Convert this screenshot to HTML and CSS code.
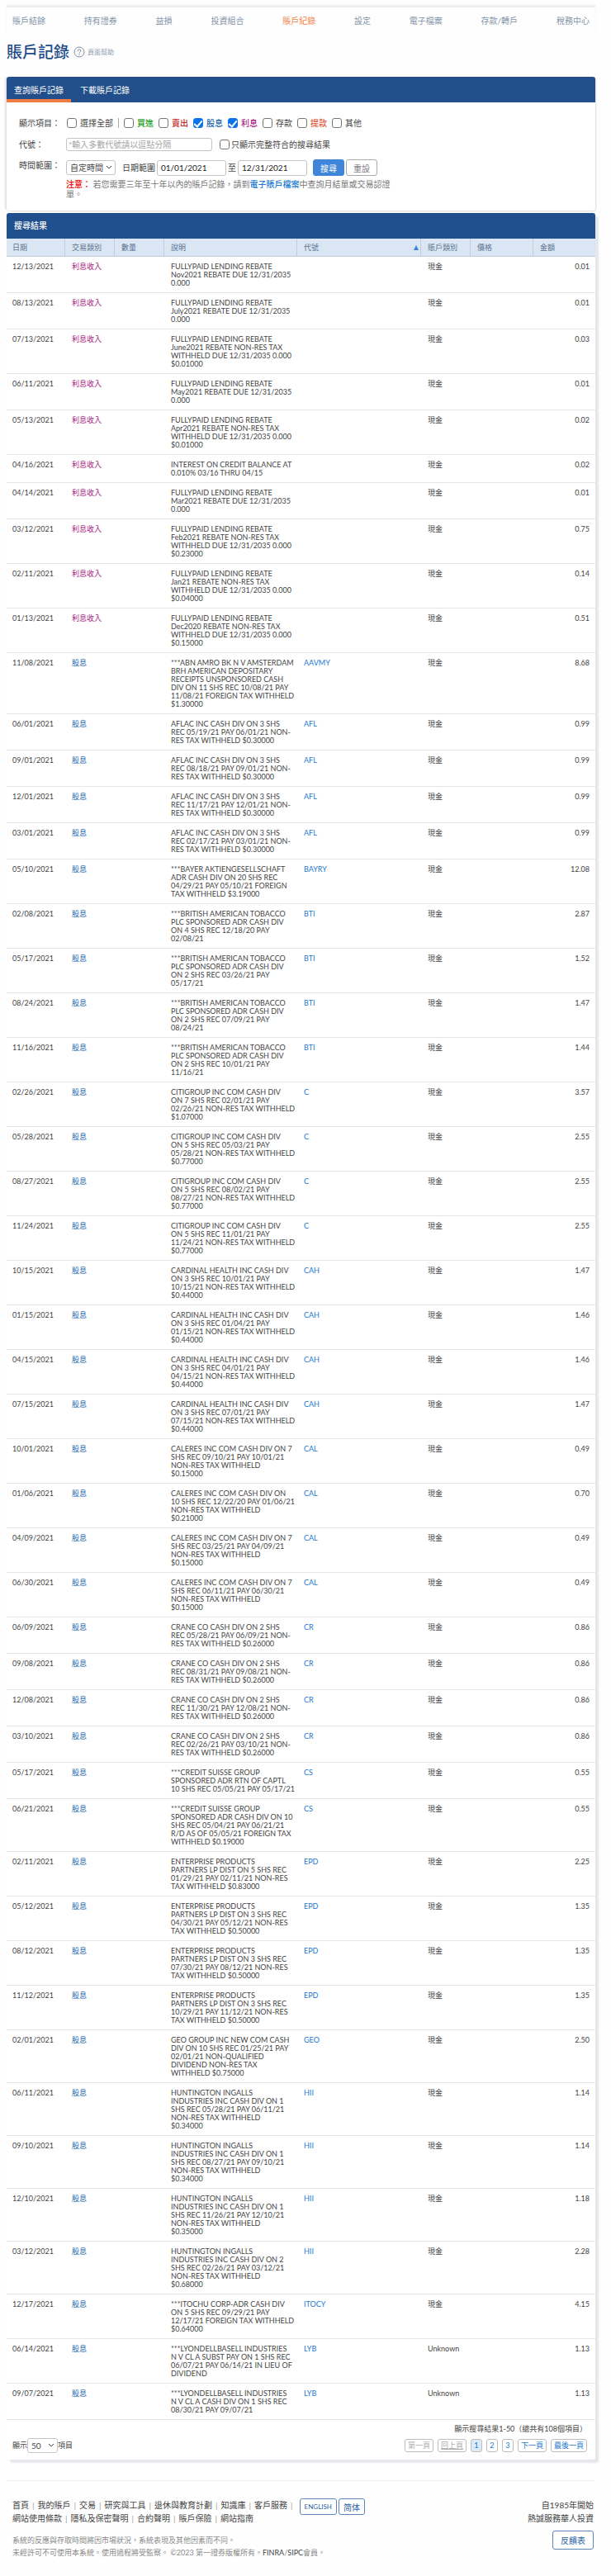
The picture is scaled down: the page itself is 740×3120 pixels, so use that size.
FILE: index.html
```
<!DOCTYPE html>
<html lang="zh-Hant">
<head>
	<meta charset="UTF-8">
	<meta name="viewport" content="width=device-width, initial-scale=1">
	<title>賬戶記錄</title>
	<link rel="stylesheet" href="styles.css">
</head>
<body>

<header class="top">
	<nav class="main-nav">
		<a href="#">賬戶結餘</a>
		<a href="#">持有證券</a>
		<a href="#">益損</a>
		<a href="#">投資組合</a>
		<a href="#" class="active">賬戶紀錄</a>
		<a href="#">設定</a>
		<a href="#">電子檔案</a>
		<a href="#">存款/轉戶</a>
		<a href="#">稅務中心</a>
	</nav>
</header>

<div class="page-title">
	<h1>賬戶記錄</h1>
	<a href="#" class="help">
		<svg width="14" height="14" viewBox="0 0 14 14" fill="none" stroke="#7f8ea6">
			<circle cx="7" cy="7" r="6"/>
			<path d="M5.2 5.6a1.8 1.8 0 1 1 2.7 1.5c-.6.4-.9.7-.9 1.3" stroke-linecap="round"/>
			<circle cx="7" cy="10.2" r=".3"/>
		</svg>
		<span>頁面幫助</span>
	</a>
</div>

<section class="panel query">
	<div class="tabs">
		<button type="button" class="tab selected">查詢賬戶記錄</button>
		<button type="button" class="tab">下載賬戶記錄</button>
	</div>
	<form class="filters">
		<div class="field">
			<span class="field-label">顯示項目：</span>
			<div class="checks">
				<label><input type="checkbox">選擇全部</label>
				<span class="bar"></span>
				<label class="buy"><input type="checkbox">買進</label>
				<label class="sell"><input type="checkbox">賣出</label>
				<label class="dividend"><input type="checkbox" checked>股息</label>
				<label class="interest"><input type="checkbox" checked>利息</label>
				<label><input type="checkbox">存款</label>
				<label class="withdraw"><input type="checkbox">提款</label>
				<label><input type="checkbox">其他</label>
			</div>
		</div>
		<div class="field">
			<label class="field-label" for="symbol">代號：</label>
			<input type="text" id="symbol" class="symbol" placeholder="*輸入多數代號請以逗點分隔">
			<label class="exact"><input type="checkbox">只顯示完整符合的搜尋結果</label>
		</div>
		<div class="field last">
			<label class="field-label" for="period">時間範圍：</label>
			<div>
				<div class="range">
					<select id="period"><option>自定時間</option></select>
					<label for="from" class="range-label">日期範圍</label>
					<input type="text" id="from" class="date" value="01/01/2021">
					<label for="to">至</label>
					<input type="text" id="to" class="date" value="12/31/2021">
					<button type="submit" class="search">搜尋</button>
					<button type="reset" class="reset">重設</button>
				</div>
				<p class="notice"><b>注意：</b> 若您需要三年至十年以內的賬戶記錄，請到<a href="#">電子賬戶檔案</a>中查詢月結單或交易認證單。</p>
			</div>
		</div>
	</form>
</section>

<section class="panel results">
	<h2>搜尋結果</h2>
	<table>
		<colgroup>
			<col class="c-date"><col class="c-type"><col class="c-qty"><col class="c-desc">
			<col class="c-symbol"><col class="c-acct"><col class="c-price"><col class="c-amount">
		</colgroup>
		<thead>
			<tr>
				<th>日期</th>
				<th>交易類別</th>
				<th>數量</th>
				<th>說明</th>
				<th class="sorted">代號</th>
				<th>賬戶類別</th>
				<th>價格</th>
				<th>金額</th>
			</tr>
		</thead>
		<tbody>
			<tr><td>12/13/2021</td><td class="interest">利息收入</td><td></td><td>FULLYPAID LENDING REBATE<br>Nov2021 REBATE DUE 12/31/2035<br>0.000</td><td></td><td>現金</td><td></td><td>0.01</td></tr>
			<tr><td>08/13/2021</td><td class="interest">利息收入</td><td></td><td>FULLYPAID LENDING REBATE<br>July2021 REBATE DUE 12/31/2035<br>0.000</td><td></td><td>現金</td><td></td><td>0.01</td></tr>
			<tr><td>07/13/2021</td><td class="interest">利息收入</td><td></td><td>FULLYPAID LENDING REBATE<br>June2021 REBATE NON-RES TAX<br>WITHHELD DUE 12/31/2035 0.000<br>$0.01000</td><td></td><td>現金</td><td></td><td>0.03</td></tr>
			<tr><td>06/11/2021</td><td class="interest">利息收入</td><td></td><td>FULLYPAID LENDING REBATE<br>May2021 REBATE DUE 12/31/2035<br>0.000</td><td></td><td>現金</td><td></td><td>0.01</td></tr>
			<tr><td>05/13/2021</td><td class="interest">利息收入</td><td></td><td>FULLYPAID LENDING REBATE<br>Apr2021 REBATE NON-RES TAX<br>WITHHELD DUE 12/31/2035 0.000<br>$0.01000</td><td></td><td>現金</td><td></td><td>0.02</td></tr>
			<tr><td>04/16/2021</td><td class="interest">利息收入</td><td></td><td>INTEREST ON CREDIT BALANCE AT<br>0.010% 03/16 THRU 04/15</td><td></td><td>現金</td><td></td><td>0.02</td></tr>
			<tr><td>04/14/2021</td><td class="interest">利息收入</td><td></td><td>FULLYPAID LENDING REBATE<br>Mar2021 REBATE DUE 12/31/2035<br>0.000</td><td></td><td>現金</td><td></td><td>0.01</td></tr>
			<tr><td>03/12/2021</td><td class="interest">利息收入</td><td></td><td>FULLYPAID LENDING REBATE<br>Feb2021 REBATE NON-RES TAX<br>WITHHELD DUE 12/31/2035 0.000<br>$0.23000</td><td></td><td>現金</td><td></td><td>0.75</td></tr>
			<tr><td>02/11/2021</td><td class="interest">利息收入</td><td></td><td>FULLYPAID LENDING REBATE<br>Jan21 REBATE NON-RES TAX<br>WITHHELD DUE 12/31/2035 0.000<br>$0.04000</td><td></td><td>現金</td><td></td><td>0.14</td></tr>
			<tr><td>01/13/2021</td><td class="interest">利息收入</td><td></td><td>FULLYPAID LENDING REBATE<br>Dec2020 REBATE NON-RES TAX<br>WITHHELD DUE 12/31/2035 0.000<br>$0.15000</td><td></td><td>現金</td><td></td><td>0.51</td></tr>
			<tr><td>11/08/2021</td><td class="dividend">股息</td><td></td><td>***ABN AMRO BK N V AMSTERDAM<br>BRH AMERICAN DEPOSITARY<br>RECEIPTS UNSPONSORED CASH<br>DIV ON 11 SHS REC 10/08/21 PAY<br>11/08/21 FOREIGN TAX WITHHELD<br>$1.30000</td><td><a href="#">AAVMY</a></td><td>現金</td><td></td><td>8.68</td></tr>
			<tr><td>06/01/2021</td><td class="dividend">股息</td><td></td><td>AFLAC INC CASH DIV ON 3 SHS<br>REC 05/19/21 PAY 06/01/21 NON-<br>RES TAX WITHHELD $0.30000</td><td><a href="#">AFL</a></td><td>現金</td><td></td><td>0.99</td></tr>
			<tr><td>09/01/2021</td><td class="dividend">股息</td><td></td><td>AFLAC INC CASH DIV ON 3 SHS<br>REC 08/18/21 PAY 09/01/21 NON-<br>RES TAX WITHHELD $0.30000</td><td><a href="#">AFL</a></td><td>現金</td><td></td><td>0.99</td></tr>
			<tr><td>12/01/2021</td><td class="dividend">股息</td><td></td><td>AFLAC INC CASH DIV ON 3 SHS<br>REC 11/17/21 PAY 12/01/21 NON-<br>RES TAX WITHHELD $0.30000</td><td><a href="#">AFL</a></td><td>現金</td><td></td><td>0.99</td></tr>
			<tr><td>03/01/2021</td><td class="dividend">股息</td><td></td><td>AFLAC INC CASH DIV ON 3 SHS<br>REC 02/17/21 PAY 03/01/21 NON-<br>RES TAX WITHHELD $0.30000</td><td><a href="#">AFL</a></td><td>現金</td><td></td><td>0.99</td></tr>
			<tr><td>05/10/2021</td><td class="dividend">股息</td><td></td><td>***BAYER AKTIENGESELLSCHAFT<br>ADR CASH DIV ON 20 SHS REC<br>04/29/21 PAY 05/10/21 FOREIGN<br>TAX WITHHELD $3.19000</td><td><a href="#">BAYRY</a></td><td>現金</td><td></td><td>12.08</td></tr>
			<tr><td>02/08/2021</td><td class="dividend">股息</td><td></td><td>***BRITISH AMERICAN TOBACCO<br>PLC SPONSORED ADR CASH DIV<br>ON 4 SHS REC 12/18/20 PAY<br>02/08/21</td><td><a href="#">BTI</a></td><td>現金</td><td></td><td>2.87</td></tr>
			<tr><td>05/17/2021</td><td class="dividend">股息</td><td></td><td>***BRITISH AMERICAN TOBACCO<br>PLC SPONSORED ADR CASH DIV<br>ON 2 SHS REC 03/26/21 PAY<br>05/17/21</td><td><a href="#">BTI</a></td><td>現金</td><td></td><td>1.52</td></tr>
			<tr><td>08/24/2021</td><td class="dividend">股息</td><td></td><td>***BRITISH AMERICAN TOBACCO<br>PLC SPONSORED ADR CASH DIV<br>ON 2 SHS REC 07/09/21 PAY<br>08/24/21</td><td><a href="#">BTI</a></td><td>現金</td><td></td><td>1.47</td></tr>
			<tr><td>11/16/2021</td><td class="dividend">股息</td><td></td><td>***BRITISH AMERICAN TOBACCO<br>PLC SPONSORED ADR CASH DIV<br>ON 2 SHS REC 10/01/21 PAY<br>11/16/21</td><td><a href="#">BTI</a></td><td>現金</td><td></td><td>1.44</td></tr>
			<tr><td>02/26/2021</td><td class="dividend">股息</td><td></td><td>CITIGROUP INC COM CASH DIV<br>ON 7 SHS REC 02/01/21 PAY<br>02/26/21 NON-RES TAX WITHHELD<br>$1.07000</td><td><a href="#">C</a></td><td>現金</td><td></td><td>3.57</td></tr>
			<tr><td>05/28/2021</td><td class="dividend">股息</td><td></td><td>CITIGROUP INC COM CASH DIV<br>ON 5 SHS REC 05/03/21 PAY<br>05/28/21 NON-RES TAX WITHHELD<br>$0.77000</td><td><a href="#">C</a></td><td>現金</td><td></td><td>2.55</td></tr>
			<tr><td>08/27/2021</td><td class="dividend">股息</td><td></td><td>CITIGROUP INC COM CASH DIV<br>ON 5 SHS REC 08/02/21 PAY<br>08/27/21 NON-RES TAX WITHHELD<br>$0.77000</td><td><a href="#">C</a></td><td>現金</td><td></td><td>2.55</td></tr>
			<tr><td>11/24/2021</td><td class="dividend">股息</td><td></td><td>CITIGROUP INC COM CASH DIV<br>ON 5 SHS REC 11/01/21 PAY<br>11/24/21 NON-RES TAX WITHHELD<br>$0.77000</td><td><a href="#">C</a></td><td>現金</td><td></td><td>2.55</td></tr>
			<tr><td>10/15/2021</td><td class="dividend">股息</td><td></td><td>CARDINAL HEALTH INC CASH DIV<br>ON 3 SHS REC 10/01/21 PAY<br>10/15/21 NON-RES TAX WITHHELD<br>$0.44000</td><td><a href="#">CAH</a></td><td>現金</td><td></td><td>1.47</td></tr>
			<tr><td>01/15/2021</td><td class="dividend">股息</td><td></td><td>CARDINAL HEALTH INC CASH DIV<br>ON 3 SHS REC 01/04/21 PAY<br>01/15/21 NON-RES TAX WITHHELD<br>$0.44000</td><td><a href="#">CAH</a></td><td>現金</td><td></td><td>1.46</td></tr>
			<tr><td>04/15/2021</td><td class="dividend">股息</td><td></td><td>CARDINAL HEALTH INC CASH DIV<br>ON 3 SHS REC 04/01/21 PAY<br>04/15/21 NON-RES TAX WITHHELD<br>$0.44000</td><td><a href="#">CAH</a></td><td>現金</td><td></td><td>1.46</td></tr>
			<tr><td>07/15/2021</td><td class="dividend">股息</td><td></td><td>CARDINAL HEALTH INC CASH DIV<br>ON 3 SHS REC 07/01/21 PAY<br>07/15/21 NON-RES TAX WITHHELD<br>$0.44000</td><td><a href="#">CAH</a></td><td>現金</td><td></td><td>1.47</td></tr>
			<tr><td>10/01/2021</td><td class="dividend">股息</td><td></td><td>CALERES INC COM CASH DIV ON 7<br>SHS REC 09/10/21 PAY 10/01/21<br>NON-RES TAX WITHHELD<br>$0.15000</td><td><a href="#">CAL</a></td><td>現金</td><td></td><td>0.49</td></tr>
			<tr><td>01/06/2021</td><td class="dividend">股息</td><td></td><td>CALERES INC COM CASH DIV ON<br>10 SHS REC 12/22/20 PAY 01/06/21<br>NON-RES TAX WITHHELD<br>$0.21000</td><td><a href="#">CAL</a></td><td>現金</td><td></td><td>0.70</td></tr>
			<tr><td>04/09/2021</td><td class="dividend">股息</td><td></td><td>CALERES INC COM CASH DIV ON 7<br>SHS REC 03/25/21 PAY 04/09/21<br>NON-RES TAX WITHHELD<br>$0.15000</td><td><a href="#">CAL</a></td><td>現金</td><td></td><td>0.49</td></tr>
			<tr><td>06/30/2021</td><td class="dividend">股息</td><td></td><td>CALERES INC COM CASH DIV ON 7<br>SHS REC 06/11/21 PAY 06/30/21<br>NON-RES TAX WITHHELD<br>$0.15000</td><td><a href="#">CAL</a></td><td>現金</td><td></td><td>0.49</td></tr>
			<tr><td>06/09/2021</td><td class="dividend">股息</td><td></td><td>CRANE CO CASH DIV ON 2 SHS<br>REC 05/28/21 PAY 06/09/21 NON-<br>RES TAX WITHHELD $0.26000</td><td><a href="#">CR</a></td><td>現金</td><td></td><td>0.86</td></tr>
			<tr><td>09/08/2021</td><td class="dividend">股息</td><td></td><td>CRANE CO CASH DIV ON 2 SHS<br>REC 08/31/21 PAY 09/08/21 NON-<br>RES TAX WITHHELD $0.26000</td><td><a href="#">CR</a></td><td>現金</td><td></td><td>0.86</td></tr>
			<tr><td>12/08/2021</td><td class="dividend">股息</td><td></td><td>CRANE CO CASH DIV ON 2 SHS<br>REC 11/30/21 PAY 12/08/21 NON-<br>RES TAX WITHHELD $0.26000</td><td><a href="#">CR</a></td><td>現金</td><td></td><td>0.86</td></tr>
			<tr><td>03/10/2021</td><td class="dividend">股息</td><td></td><td>CRANE CO CASH DIV ON 2 SHS<br>REC 02/26/21 PAY 03/10/21 NON-<br>RES TAX WITHHELD $0.26000</td><td><a href="#">CR</a></td><td>現金</td><td></td><td>0.86</td></tr>
			<tr><td>05/17/2021</td><td class="dividend">股息</td><td></td><td>***CREDIT SUISSE GROUP<br>SPONSORED ADR RTN OF CAPTL<br>10 SHS REC 05/05/21 PAY 05/17/21</td><td><a href="#">CS</a></td><td>現金</td><td></td><td>0.55</td></tr>
			<tr><td>06/21/2021</td><td class="dividend">股息</td><td></td><td>***CREDIT SUISSE GROUP<br>SPONSORED ADR CASH DIV ON 10<br>SHS REC 05/04/21 PAY 06/21/21<br>R/D AS OF 05/05/21 FOREIGN TAX<br>WITHHELD $0.19000</td><td><a href="#">CS</a></td><td>現金</td><td></td><td>0.55</td></tr>
			<tr><td>02/11/2021</td><td class="dividend">股息</td><td></td><td>ENTERPRISE PRODUCTS<br>PARTNERS LP DIST ON 5 SHS REC<br>01/29/21 PAY 02/11/21 NON-RES<br>TAX WITHHELD $0.83000</td><td><a href="#">EPD</a></td><td>現金</td><td></td><td>2.25</td></tr>
			<tr><td>05/12/2021</td><td class="dividend">股息</td><td></td><td>ENTERPRISE PRODUCTS<br>PARTNERS LP DIST ON 3 SHS REC<br>04/30/21 PAY 05/12/21 NON-RES<br>TAX WITHHELD $0.50000</td><td><a href="#">EPD</a></td><td>現金</td><td></td><td>1.35</td></tr>
			<tr><td>08/12/2021</td><td class="dividend">股息</td><td></td><td>ENTERPRISE PRODUCTS<br>PARTNERS LP DIST ON 3 SHS REC<br>07/30/21 PAY 08/12/21 NON-RES<br>TAX WITHHELD $0.50000</td><td><a href="#">EPD</a></td><td>現金</td><td></td><td>1.35</td></tr>
			<tr><td>11/12/2021</td><td class="dividend">股息</td><td></td><td>ENTERPRISE PRODUCTS<br>PARTNERS LP DIST ON 3 SHS REC<br>10/29/21 PAY 11/12/21 NON-RES<br>TAX WITHHELD $0.50000</td><td><a href="#">EPD</a></td><td>現金</td><td></td><td>1.35</td></tr>
			<tr><td>02/01/2021</td><td class="dividend">股息</td><td></td><td>GEO GROUP INC NEW COM CASH<br>DIV ON 10 SHS REC 01/25/21 PAY<br>02/01/21 NON-QUALIFIED<br>DIVIDEND NON-RES TAX<br>WITHHELD $0.75000</td><td><a href="#">GEO</a></td><td>現金</td><td></td><td>2.50</td></tr>
			<tr><td>06/11/2021</td><td class="dividend">股息</td><td></td><td>HUNTINGTON INGALLS<br>INDUSTRIES INC CASH DIV ON 1<br>SHS REC 05/28/21 PAY 06/11/21<br>NON-RES TAX WITHHELD<br>$0.34000</td><td><a href="#">HII</a></td><td>現金</td><td></td><td>1.14</td></tr>
			<tr><td>09/10/2021</td><td class="dividend">股息</td><td></td><td>HUNTINGTON INGALLS<br>INDUSTRIES INC CASH DIV ON 1<br>SHS REC 08/27/21 PAY 09/10/21<br>NON-RES TAX WITHHELD<br>$0.34000</td><td><a href="#">HII</a></td><td>現金</td><td></td><td>1.14</td></tr>
			<tr><td>12/10/2021</td><td class="dividend">股息</td><td></td><td>HUNTINGTON INGALLS<br>INDUSTRIES INC CASH DIV ON 1<br>SHS REC 11/26/21 PAY 12/10/21<br>NON-RES TAX WITHHELD<br>$0.35000</td><td><a href="#">HII</a></td><td>現金</td><td></td><td>1.18</td></tr>
			<tr><td>03/12/2021</td><td class="dividend">股息</td><td></td><td>HUNTINGTON INGALLS<br>INDUSTRIES INC CASH DIV ON 2<br>SHS REC 02/26/21 PAY 03/12/21<br>NON-RES TAX WITHHELD<br>$0.68000</td><td><a href="#">HII</a></td><td>現金</td><td></td><td>2.28</td></tr>
			<tr><td>12/17/2021</td><td class="dividend">股息</td><td></td><td>***ITOCHU CORP-ADR CASH DIV<br>ON 5 SHS REC 09/29/21 PAY<br>12/17/21 FOREIGN TAX WITHHELD<br>$0.64000</td><td><a href="#">ITOCY</a></td><td>現金</td><td></td><td>4.15</td></tr>
			<tr><td>06/14/2021</td><td class="dividend">股息</td><td></td><td>***LYONDELLBASELL INDUSTRIES<br>N V CL A SUBST PAY ON 1 SHS REC<br>06/07/21 PAY 06/14/21 IN LIEU OF<br>DIVIDEND</td><td><a href="#">LYB</a></td><td>Unknown</td><td></td><td>1.13</td></tr>
			<tr><td>09/07/2021</td><td class="dividend">股息</td><td></td><td>***LYONDELLBASELL INDUSTRIES<br>N V CL A CASH DIV ON 1 SHS REC<br>08/30/21 PAY 09/07/21</td><td><a href="#">LYB</a></td><td>Unknown</td><td></td><td>1.13</td></tr>
		</tbody>
	</table>

	<div class="table-foot">
		<p class="summary">顯示搜尋結果1-50（總共有108個項目）</p>
		<div class="table-controls">
			<div class="page-size">
				<label for="page_size">顯示</label>
				<select id="page_size"><option>50</option></select>
				<span>項目</span>
			</div>
			<div class="pager">
				<button type="button" disabled>第一頁</button>
				<button type="button" class="prev" disabled>回上頁</button>
				<button type="button" class="current">1</button>
				<button type="button">2</button>
				<button type="button">3</button>
				<button type="button">下一頁</button>
				<button type="button">最後一頁</button>
			</div>
		</div>
	</div>
</section>

<footer class="footer">
	<div class="footer-left">
		<div class="footer-nav">
			<div class="links">
				<div class="link-row">
					<a href="#">首頁</a><a href="#">我的賬戶</a><a href="#">交易</a><a href="#">研究與工具</a><a href="#">退休與教育計劃</a><a href="#">知識庫</a><a href="#">客戶服務</a><span></span>
				</div>
				<div class="link-row">
					<a href="#">網站使用條款</a><a href="#">隱私及保密聲明</a><a href="#">合約聲明</a><a href="#">賬戶保險</a><a href="#">網站指南</a>
				</div>
			</div>
			<div class="langs">
				<button type="button" class="english">ENGLISH</button>
				<button type="button" lang="zh-Hans">简体</button>
			</div>
		</div>
		<div class="legal">
			<p>系統的反應與存取時間將因市場狀況，系統表現及其他因素而不同。</p>
			<p>未經許可不可使用本系統。使用過程將受監察。 ©2023 第一證券版權所有。<a href="#">FINRA</a>/<a href="#">SIPC</a>會員。</p>
		</div>
	</div>
	<div class="footer-right">
		<p>自1985年開始</p>
		<p>熱誠服務華人投資</p>
		<button type="button">反饋表</button>
	</div>
</footer>

</body>
</html>
```
FILE: styles.css
```
*{
	box-sizing: border-box;
}
body{
	margin: 0;
	padding: 7px 19px 16px 8px;
	font-family: Lato, "Noto Sans CJK TC", sans-serif;
	font-size: 10px;
	line-height: 16px;
	color: #444;
	background-color: #fefefe;
}
h1, h2, p{
	margin: 0;
}
a{
	color: #1b78d0;
	text-decoration: none;
}
button, input, select{
	font-family: inherit;
	font-size: 10px;
	color: inherit;
	margin: 0;
}
button{
	cursor: pointer;
}

/* top navigation */
.top{
	border-top: 2px solid #ededee;
	box-shadow: 0 -1px 2px #f2f2f2;
}
.main-nav{
	display: flex;
	justify-content: space-between;
	padding: 8px 7px;
}
.main-nav a{
	color: #8494a8;
}
.main-nav a.active{
	color: #f58446;
}

.page-title{
	display: flex;
	align-items: center;
	gap: 5px;
	height: 52px;
	padding-bottom: 8px;
}
h1{
	font-size: 19px;
	line-height: 24px;
	font-weight: 500;
	color: #1f4c88;
}
.help{
	display: flex;
	align-items: center;
	gap: 3px;
	font-size: 8px;
	color: #8e99ad;
}

.panel{
	background-color: white;
	border-radius: 3px;
}
.query{
	box-shadow: 1px 1px 2px #dcdee2, -3px 0 2px -1px #e2e2e5;
}
.results{
	margin-top: 3px;
	box-shadow: 4px 4px 2px #e6e7ea;
}

/* tabs */
.tabs{
	display: flex;
	gap: 2px;
	background-color: #224f8b;
	border-radius: 3px 3px 0 0;
}
.tab{
	height: 31px;
	padding: 3px 9px 0;
	background: none;
	border: none;
	border-bottom: 4px solid transparent;
	color: white;
}
.tab.selected{
	border-bottom-color: #ee7c43;
}

/* search form */
.filters{
	padding: 17px 15px 14px;
}
.field{
	display: flex;
	align-items: center;
	margin-bottom: 10px;
}
.field.last{
	align-items: flex-start;
	margin-bottom: 0;
}
.field-label{
	flex: none;
	width: 57px;
}
.last .field-label{
	line-height: 14px;
}
.checks{
	display: flex;
	align-items: center;
	gap: 6px;
	padding-left: 1px;
}
.checks label{
	display: flex;
	align-items: center;
	gap: 4px;
}
.bar{
	width: 1px;
	height: 12px;
	background-color: #aaa;
}
.buy{
	color: #1f9d1f;
}
.sell{
	color: #c62828;
}
.withdraw{
	color: #e2583a;
}
.dividend{
	color: #2367ae;
}
.interest{
	color: #a82483;
}
.buy, .sell, .checks .dividend, .checks .interest, .withdraw{
	font-weight: 500;
}
input[type="checkbox"]{
	appearance: none;
	flex: none;
	display: flex;
	justify-content: center;
	width: 12px;
	height: 12px;
	border: 1px solid #767676;
	border-radius: 3px;
	background-color: white;
}
input[type="checkbox"]:checked{
	background-color: #0b74e8;
	border-color: #0b74e8;
}
input[type="checkbox"]:checked::after{
	content: "";
	width: 4px;
	height: 8px;
	border: solid white;
	border-width: 0 2px 2px 0;
	transform: rotate(40deg);
}
input[type="text"], select{
	border: 1px solid #c4c4c8;
	border-radius: 3px;
	background-color: white;
	outline: none;
}
.symbol{
	width: 177px;
	height: 16px;
	padding: 0 2px;
}
.symbol::placeholder{
	color: #a5a5a5;
}
.exact{
	display: flex;
	align-items: center;
	gap: 2px;
	margin-left: 9px;
}
.range{
	display: flex;
	align-items: center;
	gap: 2px;
}
select{
	appearance: none;
	height: 18px;
	padding: 0 14px 0 4px;
	background-image: url("data:image/svg+xml,%3Csvg xmlns='http://www.w3.org/2000/svg' width='8' height='6' fill='none' stroke='%23444'%3E%3Cpath d='M1 1l3 3 3-3'/%3E%3C/svg%3E");
	background-repeat: no-repeat;
	background-position: right 3px center;
}
.range-label{
	margin-left: 6px;
}
.date{
	width: 84px;
	height: 19px;
	padding: 0 4px;
	color: #222;
}
.search, .reset{
	height: 20px;
	padding: 0 8px;
	border: 1px solid #aaa;
	border-radius: 3px;
	background-color: white;
	color: #808080;
}
.search{
	margin-left: 5px;
	border-color: #3f86da;
	background-color: #3f86da;
	color: white;
}
.notice{
	max-width: 400px;
	margin-top: 4px;
	line-height: 12px;
	color: #777;
}
.notice b{
	color: #ee1c1c;
}
.notice a{
	font-weight: 500;
}

/* results */
h2{
	padding: 0 9px;
	font-size: 10px;
	line-height: 31px;
	font-weight: 500;
	color: white;
	background-color: #1f508d;
	border-radius: 3px 3px 0 0;
}
table{
	width: 100%;
	table-layout: fixed;
	border-spacing: 0;
	font-size: 9px;
	line-height: 10px;
}
.c-date{
	width: 71px;
}
.c-type, .c-qty, .c-acct{
	width: 60px;
}
.c-desc{
	width: 161px;
}
.c-symbol{
	width: 150px;
}
.c-price{
	width: 76px;
}
.c-amount{
	width: 75px;
}
th{
	padding: 6px 7px 5px 8px;
	text-align: left;
	font-weight: 400;
	color: #5d7391;
	background-color: #dae6f4;
	border-right: 1px solid #c0cddd;
	border-bottom: 1px solid #c0cddd;
}
th:last-child{
	border-right: none;
}
th.sorted{
	padding-right: 2px;
}
th.sorted::after{
	content: "";
	float: right;
	margin-top: 2px;
	border: 3px solid transparent;
	border-top: none;
	border-bottom: 6px solid #3a80d8;
}
td{
	padding: 7px 2px 6px 8px;
	vertical-align: top;
	white-space: nowrap;
	border-bottom: 1px solid #e6e6e8;
}
th:first-child, td:first-child{
	padding-left: 7px;
}
td:last-child{
	padding-right: 7px;
	text-align: right;
}

.table-foot{
	padding: 3px 10px 8px 7px;
	font-size: 9px;
}
.summary{
	text-align: right;
}
.table-controls{
	display: flex;
	justify-content: space-between;
	align-items: center;
	margin-top: 3px;
}
.page-size{
	display: flex;
	align-items: center;
}
.page-size select{
	width: 37px;
}
.pager{
	display: flex;
	gap: 5px;
}
.pager button{
	min-width: 14px;
	height: 16px;
	padding: 0 3px;
	font-size: 9px;
	line-height: 14px;
	color: #1b78d0;
	background-color: white;
	border: 1px solid #bdbdc0;
	border-radius: 3px;
}
.pager button:disabled{
	color: #aaa;
}
.pager .prev{
	text-decoration: underline;
}
.pager .current{
	background-color: #dcebf6;
}

/* footer */
.footer{
	display: flex;
	justify-content: space-between;
	margin-top: 25px;
	padding: 21px 2px 0 7px;
	border-top: 1px solid #eee;
}
.footer a{
	color: #444;
}
.footer-nav{
	display: flex;
	align-items: flex-start;
	gap: 4px;
}
.link-row{
	display: flex;
}
.link-row > * + *::before{
	content: "|";
	margin: 0 4px;
	color: #999;
}
.langs{
	display: flex;
	gap: 2px;
}
.langs button{
	height: 20px;
	padding: 0 5px;
	color: #2a62a8;
	background-color: white;
	border: 1px solid #5b86bf;
	border-radius: 3px;
}
.langs .english{
	font-size: 8px;
}
.legal{
	margin-top: 11px;
	font-size: 9px;
	line-height: 15px;
	color: #8a8a8a;
}
.footer-right{
	text-align: right;
}
.footer-right button{
	height: 23px;
	margin-top: 7px;
	padding: 0 9px;
	color: #2a62a8;
	background-color: white;
	border: 1px solid #5b86bf;
	border-radius: 3px;
}
```
